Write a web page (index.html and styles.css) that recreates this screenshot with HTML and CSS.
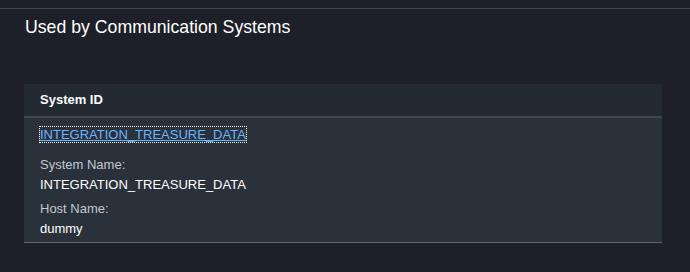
FILE: index.html
```html
<!DOCTYPE html>
<html lang="en">
<head>
    <meta charset="UTF-8">
    <title>Used by Communication Systems</title>
    <link rel="stylesheet" href="styles.css">
</head>
<body>
    <div class="page">
        <h2 class="section-title">Used by Communication Systems</h2>
        <div class="table">
            <div class="table-header">System ID</div>
            <div class="table-row">
                <a class="system-link" href="#">INTEGRATION_TREASURE_DATA</a>
                <div class="field">
                    <div class="field-label">System Name:</div>
                    <div class="field-value">INTEGRATION_TREASURE_DATA</div>
                </div>
                <div class="field">
                    <div class="field-label">Host Name:</div>
                    <div class="field-value">dummy</div>
                </div>
            </div>
        </div>
    </div>
</body>
</html>
```
FILE: styles.css
```css
body {
    margin: 0;
    padding: 0;
    background-color: #1d2028;
    font-family: "Liberation Sans", Arial, sans-serif;
    color: #ffffff;
}
.page {
    margin-top: 8px;
    border-top: 1px solid #3a4551;
    height: 263px;
}
.section-title {
    margin: 0;
    padding: 7px 0 0 25px;
    font-size: 17.7px;
    font-weight: normal;
    line-height: 22px;
    color: #ffffff;
}
.table {
    margin: 46px 0 0 24px;
    width: 638px;
    background-color: #29313a;
    border-bottom: 1px solid #5b6671;
}
.table-header {
    height: 32px;
    line-height: 32px;
    padding-left: 16px;
    background-color: #232a31;
    border-bottom: 2px solid #3b4650;
    font-size: 13px;
    font-weight: bold;
    color: #ffffff;
}
.table-row {
    padding: 7px 16px 3px;
}
.system-link {
    display: inline-block;
    font-size: 13px;
    line-height: 15px;
    color: #6cb4ff;
    outline: 1px dotted #ffffff;
    text-decoration: underline;
}
.field {
    margin-top: 12px;
}
.field + .field {
    margin-top: 4px;
}
.field-label {
    font-size: 13px;
    line-height: 20px;
    color: #c3c8cf;
}
.field-value {
    font-size: 13px;
    line-height: 20px;
    color: #ffffff;
}
```
